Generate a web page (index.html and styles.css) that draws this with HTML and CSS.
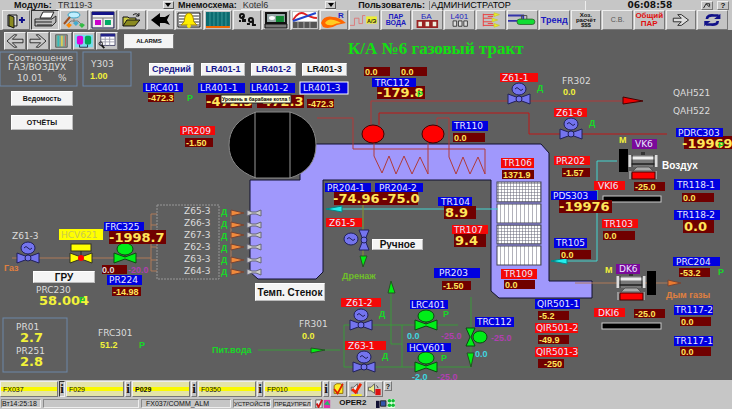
FILE: index.html
```html
<!DOCTYPE html>
<html lang="ru">
<head>
    <meta charset="UTF-8">
    <title>К/А №6 газовый тракт</title>
    <link rel="stylesheet" href="styles.css">
</head>
<body>
    <header>
        <div class="info-bar">
            <label for="module">Модуль:</label>
            <div class="combo combo-module"><select id="module"><option>TR119-3</option></select><span class="arrow"></span></div>
            <label for="scheme">Мнемосхема:</label>
            <div class="combo combo-scheme"><select id="scheme"><option>Kotel6</option></select><span class="arrow"></span></div>
            <label for="user" class="user-label">Пользователь:</label>
            <input id="user" class="user" type="text" value="АДМИНИСТРАТОР" readonly>
            <span class="blank"></span>
            <time class="clock">06:08:58</time>
            <span class="spacer"></span>
            <button class="mini" aria-label="Найти">
                <svg viewBox="0 0 10 8"><path d="M1 7L4 2L8 6M4 2h4v3" fill="none" stroke="#111"/></svg>
            </button>
            <button class="mini">?</button>
        </div>

        <div class="toolbar">
            <button aria-label="Выход"><svg viewBox="0 0 26 18"><path d="M5 4h9v11H5z" fill="#ddd" stroke="#111"/><path d="M6 4l5 2v11l-5-2z" fill="#8a8a20" stroke="#111"/><path d="M16 9h6M19 6v6" stroke="#10108a" stroke-width="2"/></svg></button>
            <button class="pressed" aria-label="Печать"><svg viewBox="0 0 26 18"><path d="M8 7l3-6h11l-3 6z" fill="#fff" stroke="#222"/><path d="M3 8h17l4-3v6l-4 4H3z" fill="#bbb" stroke="#222"/><path d="M3 11h17M5 14h15" stroke="#222"/></svg></button>
            <button aria-label="Поиск"><svg viewBox="0 0 26 18"><ellipse cx="13" cy="4" rx="6" ry="3" fill="#bfefff" stroke="#3aa0c0"/><path d="M9 6l-6 7" stroke="#a05020" stroke-width="2"/><path d="M13 8v3M7 13l3-3h7l3 3" fill="none" stroke="#777"/><path d="M8 12l3 2-3 3-3-3z" fill="#f80"/><path d="M15 10l3 2-3 3-3-3z" fill="#4ac"/><path d="M21 12l3 2-3 3-3-3z" fill="#3b4"/></svg></button>
            <button aria-label="Мнемосхемы"><svg viewBox="0 0 26 18"><path d="M2 1h22v16H2z" fill="#eee" stroke="#114"/><path d="M2 1h22v3H2z" fill="#118"/><path d="M5 9h6v5H5z" fill="#c0c"/><path d="M15 9h6v5h-6z" fill="#0a6"/><path d="M2 7h22M13 7v9" stroke="#777"/></svg></button>
            <button aria-label="Открыть"><svg viewBox="0 0 26 18"><path d="M4 15V6h5l1 1h7v2" fill="#cc4" stroke="#111"/><path d="M4 15l4-6h13l-5 6z" fill="#8a8a20" stroke="#111"/><path d="M14 4q4-3 6 1m0 0v-3m0 3h-3" fill="none" stroke="#111"/></svg></button>
            <button aria-label="Назад"><svg viewBox="0 0 26 18"><path d="M3 9l9-7v4h5l5-3-3 6 3 5-5-2h-5v4z" fill="#000"/></svg></button>
            <button aria-label="Тревоги"><svg viewBox="0 0 26 18"><path d="M2 2h22v14H2z" fill="#fff" stroke="#111"/><path d="M3 5h20M3 8h20M3 11h20M3 14h20" stroke="#333"/><path d="M5 14q4-2 4-8 1-4 4-4t4 4q0 6 4 8z" fill="#fe0" stroke="#a80"/><circle cx="13" cy="15" r="2" fill="#fe0"/></svg></button>
            <button aria-label="Тренды"><svg viewBox="0 0 26 18"><path d="M1 1h24v14H1z" fill="#0b6b70"/><path d="M5 1v14M9 1v14M13 1v14M17 1v14M21 1v14" stroke="#3a9a9a"/><path d="M1 16h24" stroke="#e60" stroke-width="2"/></svg></button>
            <button aria-label="Обзор"><svg viewBox="0 0 26 18"><g fill="none" stroke="#111" stroke-width="2"><circle cx="8" cy="5" r="2"/><path d="M5 10h2M9 5v6M11 11v-3"/><circle cx="17" cy="9" r="2"/><path d="M13 13h3M19 9v5h3"/></g></svg></button>
            <button aria-label="Станция"><svg viewBox="0 0 26 18"><path d="M3 2h20v10H3z" fill="#9aa" stroke="#111" stroke-width="2"/><ellipse cx="9" cy="7" rx="3" ry="2" fill="#fff"/><path d="M13 5h8v6h-8z" fill="#183"/><path d="M2 13h22v4H2z" fill="#777" stroke="#111"/></svg></button>
            <button aria-label="График"><svg viewBox="0 0 26 18"><path d="M1 1h24v9H1z" fill="#fff"/><path d="M1 9q6-10 12-6t12 4" fill="none" stroke="#d22" stroke-width="2"/><path d="M1 10L24 2" stroke="#24c" stroke-width="2"/><path d="M1 11h24v6H1z" fill="#555"/><path d="M6 11v6M12 11v6M18 11v6" stroke="#aaa"/></svg></button>
            <button aria-label="Горелка"><svg viewBox="0 0 26 18"><path d="M0 12Q3 4 12 6q6 0 13 6-5 1-9 2-8 5-14 2z" fill="#f60"/><path d="M4 12q3-5 9-3 4 1 7 3-5 0-8 2-6 1-8-2z" fill="#fc2"/><text x="17" y="7" class="icon-text">R</text></svg></button>
            <button class="wide" aria-label="АЭ"><svg viewBox="0 0 32 18"><path d="M0 15h5V7h5v6h4V4h3" fill="none" stroke="#d77"/><path d="M18 5h12v8H18z" fill="#ee3"/><text x="19" y="12" class="icon-small">А/Э</text></svg></button>
            <button class="wide blue-text">ПАР<br>ВОДА</button>
            <button class="wide" aria-label="БА"><svg viewBox="0 0 32 18"><text x="9" y="8" class="icon-big">БА</text><path d="M5 10h6v7H5zM13 10h6v7h-6zM21 10h6v7h-6z" fill="#eed" stroke="#922" stroke-width="2"/></svg></button>
            <button class="wide" aria-label="L401"><svg viewBox="0 0 32 18"><text x="6" y="8" class="icon-big">L401</text><path d="M9 10h4v6H9zM15 10h4v6h-4zM21 10h4v6h-4z" fill="#ddd" stroke="#333"/></svg></button>
            <button class="wide" aria-label="Горелки"><svg viewBox="0 0 32 18"><path d="M7 2v14M7 3h12M7 7h10M7 11h10M7 15h12M12 5h6M12 13h6" fill="none" stroke="#e33"/><path d="M19 1l6 2-6 2zM17 7l6 2-6 2zM19 13l6 2-6 2z" fill="#ee2" stroke="#cc3"/></svg></button>
            <button class="wide" aria-label="Барабан"><svg viewBox="0 0 32 18"><path d="M0 4h17v4M0 10h10" fill="none" stroke="#33a" stroke-width="2"/><path d="M15 8V4h6v4" fill="none" stroke="#444"/><rect x="10" y="8" width="20" height="6" rx="3" fill="#1d3" stroke="#363"/></svg></button>
            <button class="wide trend">Тренд</button>
            <button class="wide small-text">Хоз.<br>расчёт<br>$$$</button>
            <button class="wide grey-text">С.В.</button>
            <button class="wide red-text">Общий<br>ПАР</button>
            <button class="wide" aria-label="Вперёд"><svg viewBox="0 0 32 18"><path d="M7 7h9l-4-4h4l8 6-8 6h-4l4-4H7z" fill="#ddd" stroke="#222"/></svg></button>
            <button class="wide" aria-label="Обновить"><svg viewBox="0 0 32 18"><path d="M10 8q0-5 8-4h5M22 10q0 5-8 4H9" fill="none" stroke="#118" stroke-width="3"/><path d="M18 8h7V2zM14 10H7v6z" fill="#118"/></svg></button>
        </div>
    </header>

    <main class="mimic">
        <nav class="nav-bar">
            <button aria-label="Предыдущая"><svg viewBox="0 0 22 18"><path d="M2 9l8-7h3l-5 5h12v4H8l5 5h-3z" fill="#ccc" stroke="#222"/></svg></button>
            <button aria-label="Следующая"><svg viewBox="0 0 22 18"><path d="M20 9l-8-7H9l5 5H2v4h12l-5 5h3z" fill="#ccc" stroke="#222"/></svg></button>
            <button aria-label="Панели"><svg viewBox="0 0 22 18"><path d="M5 2h13v14H5z" fill="#8a9" stroke="#555"/><path d="M8 3v12" stroke="#3bb" stroke-width="2"/><path d="M12 3v12" stroke="#dc5" stroke-width="2"/><path d="M16 3v12" stroke="#c55"/></svg></button>
            <button aria-label="Ёмкости"><svg viewBox="0 0 22 18"><path d="M1 2h20v14H1z" fill="#7de"/><rect x="3" y="3" width="7" height="10" rx="2" fill="#d0d"/><rect x="12" y="3" width="7" height="10" rx="2" fill="#0a5"/><path d="M6 13v3h9v-3" fill="none" stroke="#224"/></svg></button>
            <button aria-label="Таблица"><svg viewBox="0 0 22 18"><path d="M4 1h16v13H4z" fill="#fff" stroke="#446"/><path d="M4 1h16v3H4z" fill="#228"/><path d="M4 7h16M4 10h16M9 4v10M14 4v10" stroke="#99a"/><circle cx="4" cy="12" r="2" fill="none" stroke="#111"/><path d="M5 14l3 3" stroke="#111" stroke-width="2"/></svg></button>
            <button class="alarms">ALARMS</button>
        </nav>

        <svg class="scheme" viewBox="0 30 732 350">
            <defs>
                <g id="bowtie"><path d="M-11 -5L0 -1L11 -5V5L0 1L-11 5Z"/></g>
                <g id="valve">
                    <path d="M0 -4V0" stroke="#224"/>
                    <ellipse cy="-10" rx="7" ry="6"/>
                    <path d="M-4 -10q2 -3 4 0t4 0" fill="none"/>
                    <use href="#bowtie"/>
                    <circle r="3"/>
                </g>
                <g id="regulator">
                    <ellipse cy="-9" rx="8" ry="6"/>
                    <path d="M0 -3V0"/>
                    <use href="#bowtie"/>
                </g>
                <g id="nozzle">
                    <path d="M-16 -3L-3 0L-16 3Z" fill="#f08a3c" stroke="#743"/>
                    <path d="M0 -3L5 -1H9L14 -3V3L9 1H5L0 3Z" fill="#ccc" stroke="#667"/>
                </g>
                <g id="motor">
                    <path d="M13 -3h4v3h-4z" fill="#333"/>
                    <rect x="1" width="28" height="12" fill="#777"/>
                    <path d="M3 3h24" stroke="#eee" stroke-width="3"/>
                    <path d="M3 9h24" stroke="#333" stroke-width="2"/>
                    <path d="M2 0v12M28 0v12" stroke="#ddd" stroke-width="3"/>
                    <path d="M4 0v12M26 0v12" stroke="#222"/>
                    <path d="M9 12h12l4 4H5z" fill="#aaa" stroke="#555"/>
                    <path d="M2 24v-7h26v7" fill="none" stroke="#999" stroke-width="2"/>
                    <rect x="4" y="17" width="23" height="7" fill="#f00" stroke="#400"/>
                </g>
                <pattern id="mesh" width="3" height="3" patternUnits="userSpaceOnUse">
                    <rect width="3" height="3" fill="#fff"/><path d="M0 0H3M0 0V3" stroke="#667"/>
                </pattern>
                <pattern id="bars" width="4" height="4" patternUnits="userSpaceOnUse">
                    <rect width="4" height="4" fill="#fff"/><path d="M0 0V4" stroke="#667"/>
                </pattern>
            </defs>

            <!-- газоход и барабан -->
            <path class="duct" d="M300 144H541L549 153V281H592V298H499L491 291V180H323V272L316 279H258L250 272V180H300Z"/>
            <path d="M256 112H290Q316 120 316 145T290 178H256Q229 168 229 145T256 112Z" fill="#000" stroke="#888"/>
            <path d="M255 112V178M290 112V178" stroke="#999"/>
            <rect x="497" y="182" width="44" height="20" fill="url(#mesh)" stroke="#445"/>
            <rect x="497" y="204" width="44" height="19" fill="url(#bars)" stroke="#445"/>
            <rect x="497" y="225" width="44" height="19" fill="url(#mesh)" stroke="#445"/>
            <rect x="497" y="246" width="44" height="19" fill="url(#bars)" stroke="#445"/>

            <!-- паровые линии -->
            <g class="pipe steam">
                <path d="M371 125V101H625"/>
                <path d="M317 118H353V149H485V174L478 157L470 174L463 157L456 174L449 157V118H437V125"/>
                <path d="M374 143V156L382 173L389 156L396 174L404 156L412 174L420 157L428 174V143"/>
                <path class="strong" d="M379 125V113H529V134H667"/>
            </g>
            <path d="M623 97L643 101L623 104Z" fill="#e00" stroke="#400"/>
            <g fill="#f00" stroke="#400"><ellipse cx="373" cy="134" rx="11" ry="9"/><ellipse cx="433" cy="134" rx="11" ry="9"/></g>

            <!-- воздух, газ, вода -->
            <g class="pipe air"><path d="M340 209H498M617 161H597V261H566"/></g>
            <path d="M326 209L342 206V212ZM551 261L567 258V264Z" fill="#2ee" stroke="#088"/>
            <g class="pipe gas">
                <path d="M12 258H151M157 214H151V271H157M151 225H157M151 235H157M151 247H157M151 260H157M231 213V272M575 283H668"/>
            </g>
            <path d="M668 280L681 283L668 286Z" fill="#e87a30" stroke="#743"/>
            <g class="pipe water">
                <path d="M258 350H340M344 367V325H458M344 367H471V297M402 325V367M391 292V344H402"/>
                <path d="M363 204V257" class="drain"/>
            </g>
            <path d="M311 348L325 350L311 353ZM388 293L391 281L395 293ZM467 353H474L471 367ZM360 256H367L363 267Z" fill="#0e1" stroke="#252"/>
            <rect x="157" y="205" width="62" height="74" class="dotted"/>

            <g class="frames">
                <rect x="0" y="52" width="77" height="34"/>
                <rect x="83" y="52" width="48" height="34"/>
                <rect x="3" y="318" width="64" height="54"/>
            </g>

            <!-- арматура -->
            <g class="blue-valve">
                <use href="#valve" x="519" y="99"/>
                <use href="#valve" x="571" y="134"/>
                <use href="#valve" x="28" y="258"/>
                <use href="#valve" x="361" y="325"/>
                <use href="#valve" x="364" y="367"/>
                <path d="M359 230H369L365 240L369 250H359L363 240Z"/>
                <ellipse cx="351" cy="239" rx="7" ry="6"/>
                <path d="M347 239q2 -3 4 0t4 0" fill="none"/>
                <circle cx="364" cy="240" r="3"/>
            </g>
            <g class="green-valve">
                <use href="#regulator" x="125" y="258"/>
                <use href="#regulator" x="426" y="325"/>
                <use href="#regulator" x="426" y="367"/>
                <path d="M466 328H475L471 337L475 346H466L470 337Z"/>
                <ellipse cx="480" cy="337" rx="7" ry="6"/>
            </g>
            <g fill="#ff0" stroke="#332"><rect x="71" y="244" width="20" height="7"/><use href="#bowtie" x="81" y="258"/></g>
            <path d="M81 251V258" stroke="#222"/><circle cx="81" cy="258" r="3" fill="#f00"/>
            <use href="#nozzle" x="247" y="213"/><use href="#nozzle" x="247" y="225"/><use href="#nozzle" x="247" y="235"/>
            <use href="#nozzle" x="247" y="247"/><use href="#nozzle" x="247" y="260"/><use href="#nozzle" x="247" y="272"/>

            <!-- вентилятор и дымосос -->
            <rect x="619" y="149" width="9" height="23"/><use href="#motor" x="628" y="155"/>
            <rect x="647" y="271" width="9" height="24"/><use href="#motor" x="616" y="276"/>
            <g stroke="#ccc"><rect x="603" y="196" width="58" height="6"/><rect x="602" y="323" width="59" height="6"/></g>

            <text x="348" y="54" class="title">К/А №6 газовый тракт</text>

            <!-- подписи без фона -->
            <g class="name">
                <text x="8" y="61">Соотношение</text><text x="8" y="70">ГАЗ/ВОЗДУХ</text>
                <text x="17" y="81">10.01</text><text x="58" y="81">%</text>
                <text x="91" y="67">Y303</text><text x="562" y="84">FR302</text>
                <text x="673" y="96">QAH521</text><text x="673" y="114">QAH522</text>
                <text x="12" y="239">Z61-3</text><text x="36" y="293">PRC230</text>
                <text x="16" y="330">PR01</text><text x="16" y="354">PR251</text>
                <text x="98" y="336">FRC301</text><text x="299" y="327">FR301</text>
                <text x="184" y="214">Z65-3</text><text x="184" y="226">Z66-3</text><text x="184" y="238">Z67-3</text>
                <text x="184" y="250">Z62-3</text><text x="184" y="262">Z63-3</text><text x="184" y="274">Z64-3</text>
                <text x="662" y="169" class="air-name">Воздух</text>
            </g>
            <g class="reading">
                <text x="90" y="79">1.00</text><text x="563" y="95">0.0</text>
                <text x="100" y="348">51.2</text><text x="302" y="339">0.0</text>
                <text x="619" y="143">M</text><text x="605" y="273">M</text>
                <text x="39" y="305" class="big">58.004</text>
                <text x="20" y="342" class="big">2.7</text><text x="20" y="366" class="big">2.8</text>
            </g>
            <g class="mode">
                <text x="187" y="101">P</text><text x="537" y="91">Д</text><text x="589" y="126">Д</text>
                <text x="221" y="215">Д</text><text x="221" y="227">Д</text><text x="221" y="239">Д</text>
                <text x="221" y="251">Д</text><text x="221" y="263">Д</text><text x="221" y="275">Д</text>
                <text x="379" y="317">Д</text><text x="382" y="359">Д</text>
                <text x="443" y="317">P</text><text x="441" y="361">P</text><text x="139" y="348">P</text>
                <text x="718" y="275">P</text><text x="79" y="303">P</text>
                <text x="342" y="279" class="drain-name">Дренаж</text><text x="212" y="353">Пит.вода</text>
            </g>
            <g class="gas-name"><text x="4" y="271">Газ</text><text x="666" y="298">Дым газы</text></g>
            <g class="setpoint"><text x="128" y="273">-20.0</text><text x="441" y="339">-25.0</text><text x="437" y="380">-25.0</text><text x="491" y="341">-25.0</text></g>
            <g class="output"><text x="407" y="339">0.0</text><text x="412" y="380">-2.0</text><text x="475" y="357">0.0</text></g>

            <!-- значения -->
            <g class="value">
                <rect x="148" y="93" width="26" height="9"/><text x="148" y="101">-472.3</text>
                <rect x="307" y="99" width="27" height="9"/><text x="308" y="107">-472.3</text>
                <rect x="185" y="138" width="28" height="9"/><text x="186" y="146">-1.50</text>
                <rect x="364" y="67" width="26" height="9"/><text x="365" y="75">0.0</text>
                <rect x="400" y="67" width="27" height="9"/><text x="401" y="75">0.0</text>
                <rect x="453" y="133" width="32" height="9"/><text x="454" y="141">0.0</text>
                <rect x="562" y="168" width="28" height="9"/><text x="563" y="176">-1.57</text>
                <rect x="634" y="182" width="31" height="9"/><text x="635" y="190">-25.0</text>
                <rect x="682" y="193" width="32" height="9"/><text x="683" y="201">0.0</text>
                <rect x="603" y="231" width="32" height="9"/><text x="604" y="239">0.0</text>
                <rect x="560" y="250" width="31" height="9"/><text x="561" y="258">0.0</text>
                <rect x="679" y="268" width="31" height="9"/><text x="680" y="276">-53.2</text>
                <rect x="502" y="170" width="32" height="9"/><text x="503" y="178">1371.9</text>
                <rect x="504" y="280" width="31" height="9"/><text x="505" y="288">0.0</text>
                <rect x="442" y="281" width="29" height="9"/><text x="443" y="289">-1.50</text>
                <rect x="112" y="287" width="29" height="9"/><text x="113" y="295">-14.98</text>
                <rect x="102" y="265" width="25" height="9"/><text x="102" y="273" class="pale">0.0</text>
                <rect x="538" y="311" width="31" height="9"/><text x="539" y="319">-5.2</text>
                <rect x="538" y="335" width="31" height="9"/><text x="539" y="343">-49.9</text>
                <rect x="538" y="359" width="26" height="9"/><text x="544" y="367">-250</text>
                <rect x="634" y="309" width="31" height="9"/><text x="635" y="317">-25.0</text>
                <rect x="680" y="317" width="31" height="9"/><text x="681" y="325">0.0</text>
                <rect x="680" y="347" width="31" height="9"/><text x="681" y="355">0.0</text>
            </g>
            <g class="value big">
                <rect x="206" y="95" width="46" height="13"/><text x="206" y="106">-472.3</text>
                <rect x="257" y="95" width="47" height="13"/><text x="257" y="106">-472.3</text>
                <rect x="377" y="86" width="48" height="13"/><text x="377" y="97">-179.8</text>
                <rect x="684" y="136" width="48" height="13"/><text x="682" y="148">-19969</text>
                <rect x="559" y="200" width="53" height="13"/><text x="559" y="211">-19976</text>
                <rect x="683" y="220" width="31" height="13"/><text x="684" y="231">0.0</text>
                <rect x="444" y="206" width="32" height="13"/><text x="445" y="217">8.9</text>
                <rect x="454" y="234" width="32" height="13"/><text x="455" y="245">9.4</text>
                <rect x="334" y="192" width="48" height="13"/><text x="333" y="203">-74.96</text>
                <rect x="382" y="192" width="36" height="13"/><text x="382" y="203">-75.0</text>
                <rect x="109" y="230" width="57" height="14"/><text x="109" y="242">-1998.7</text>
            </g>
            <g class="mode"><text x="417" y="97">P</text><text x="718" y="148">P</text></g>

            <!-- позиции приборов -->
            <g class="tag blue">
                <rect x="143" y="83" width="40" height="9"/><text x="145" y="91">LRC401</text>
                <rect x="198" y="83" width="47" height="10"/><text x="200" y="91">LR401-1</text>
                <rect x="250" y="83" width="45" height="10"/><text x="251" y="91">LR401-2</text>
                <rect x="300" y="82" width="48" height="12" stroke="#fff"/><text x="303" y="91">LR401-3</text>
                <rect x="372" y="78" width="44" height="9"/><text x="375" y="86">TRC112</text>
                <rect x="452" y="121" width="36" height="10"/><text x="454" y="129">TR110</text>
                <rect x="676" y="128" width="47" height="9"/><text x="678" y="136">PDRC303</text>
                <rect x="551" y="191" width="46" height="9"/><text x="553" y="199">PDS303</text>
                <rect x="674" y="179" width="46" height="11"/><text x="677" y="188">TR118-1</text>
                <rect x="674" y="210" width="46" height="10"/><text x="677" y="218">TR118-2</text>
                <rect x="554" y="238" width="33" height="10"/><text x="556" y="246">TR105</text>
                <rect x="673" y="257" width="47" height="9"/><text x="676" y="265">PRC204</text>
                <rect x="434" y="268" width="46" height="10"/><text x="439" y="276">PR203</text>
                <rect x="438" y="197" width="34" height="9"/><text x="441" y="205">TR104</text>
                <rect x="325" y="183" width="46" height="9"/><text x="327" y="191">PR204-1</text>
                <rect x="375" y="183" width="48" height="9"/><text x="379" y="191">PR204-2</text>
                <rect x="104" y="222" width="40" height="9"/><text x="105" y="230">FRC325</text>
                <rect x="107" y="275" width="35" height="10"/><text x="109" y="283">PR224</text>
                <rect x="410" y="300" width="38" height="9"/><text x="411" y="308">LRC401</text>
                <rect x="407" y="343" width="44" height="9"/><text x="409" y="351">HCV601</text>
                <rect x="475" y="317" width="39" height="10"/><text x="477" y="325">TRC112</text>
                <rect x="535" y="299" width="45" height="10"/><text x="537" y="307">QIR501-1</text>
                <rect x="674" y="305" width="39" height="10"/><text x="675" y="313">TR117-2</text>
                <rect x="674" y="336" width="39" height="10"/><text x="675" y="344">TR117-1</text>
            </g>
            <g class="tag red">
                <rect x="180" y="126" width="35" height="9"/><text x="182" y="134">PR209</text>
                <rect x="500" y="73" width="38" height="9"/><text x="502" y="81">Z61-1</text>
                <rect x="554" y="108" width="33" height="9"/><text x="556" y="116">Z61-6</text>
                <rect x="554" y="156" width="36" height="9"/><text x="556" y="164">PR202</text>
                <rect x="594" y="181" width="31" height="9"/><text x="598" y="189">VKI6</text>
                <rect x="602" y="219" width="36" height="9"/><text x="604" y="227">TR103</text>
                <rect x="501" y="158" width="33" height="10"/><text x="503" y="166">TR106</text>
                <rect x="501" y="269" width="36" height="10"/><text x="504" y="277">TR109</text>
                <rect x="452" y="225" width="36" height="9"/><text x="454" y="233">TR107</text>
                <rect x="326" y="218" width="36" height="9"/><text x="329" y="226">Z61-5</text>
                <rect x="341" y="298" width="40" height="9"/><text x="346" y="306">Z61-2</text>
                <rect x="345" y="341" width="41" height="9"/><text x="348" y="349">Z63-1</text>
                <rect x="535" y="323" width="43" height="10"/><text x="536" y="331">QIR501-2</text>
                <rect x="535" y="347" width="43" height="10"/><text x="536" y="355">QIR501-3</text>
                <rect x="594" y="308" width="31" height="9"/><text x="598" y="316">DKI6</text>
            </g>
            <g class="tag purple">
                <rect x="632" y="139" width="25" height="10"/><text x="635" y="147">VK6</text>
                <rect x="616" y="264" width="24" height="10"/><text x="619" y="272">DK6</text>
            </g>
            <g class="tag yellow"><rect x="59" y="229" width="44" height="11"/><text x="61" y="238">HCV621</text></g>

            <g class="hint"><rect x="221" y="95" width="70" height="8"/><text x="222" y="101">Уровень в барабане котла !</text></g>

            <!-- кнопки на схеме -->
            <foreignObject x="11" y="91" width="62" height="15"><button class="plate small">Ведомость</button></foreignObject>
            <foreignObject x="11" y="115" width="62" height="15"><button class="plate small">ОТЧЁТЫ</button></foreignObject>
            <foreignObject x="149" y="63" width="45" height="13"><button class="plate navy">Средний</button></foreignObject>
            <foreignObject x="201" y="63" width="44" height="13"><button class="plate navy">LR401-1</button></foreignObject>
            <foreignObject x="251" y="63" width="45" height="13"><button class="plate navy">LR401-2</button></foreignObject>
            <foreignObject x="302" y="63" width="45" height="13"><button class="plate level">LR401-3</button></foreignObject>
            <foreignObject x="33" y="271" width="62" height="12"><button class="plate">ГРУ</button></foreignObject>
            <foreignObject x="372" y="239" width="51" height="11"><button class="plate">Ручное</button></foreignObject>
            <foreignObject x="255" y="283" width="70" height="18"><button class="plate">Темп. Стенок</button></foreignObject>
        </svg>
    </main>

    <footer>
        <div class="alarm-row">
            <button class="alarm">FX037</button><button class="info pressed">i</button>
            <button class="alarm">F029</button><button class="info">i</button>
            <button class="alarm strong">P029</button><button class="info">i</button>
            <button class="alarm">F0350</button><button class="info">i</button>
            <button class="alarm">FP010</button><button class="info">i</button>
            <button class="ack" aria-label="Квитировать"><svg viewBox="0 0 16 16"><path d="M3 13V4l3-2h4l3 2v9z" fill="#fe2" stroke="#860"/><path d="M3 8l4 5 6-11" fill="none" stroke="#d20" stroke-width="2"/></svg></button>
            <button class="ack" aria-label="Сброс звука"><svg viewBox="0 0 16 16"><path d="M2 6h3l4-4v11L5 10H2z" fill="#eee" stroke="#555"/><path d="M3 8l4 4 6-10" fill="none" stroke="#e20" stroke-width="3"/><path d="M2 15h12" stroke="#fe2" stroke-width="2"/></svg></button>
            <button class="ack" aria-label="Звук"><svg viewBox="0 0 16 16"><path d="M1 6h3l4-4v11L4 10H1z" fill="#ee8" stroke="#555"/><path d="M9 8h6v7H9z" fill="#d11"/><path d="M10 4q2 1 2 3" fill="none" stroke="#333"/></svg></button>
            <button class="help">?</button>
        </div>
        <div class="status-row">
            <span class="cell date">Вт14:25:18</span>
            <span class="cell empty"></span>
            <span class="cell source">FX037/COMM_ALM</span>
            <span class="cell kind">УСТРОЙСТВ</span>
            <span class="cell kind">ПРЕДУПРЕЛ</span>
            <svg class="status-icons" viewBox="0 0 18 10"><path d="M1 1h7v9H1z" fill="#eee" stroke="#555"/><path d="M2 5l2 4 4-8" fill="none" stroke="#c11" stroke-width="2"/><path d="M10 1h7v9h-7z" fill="#d3a"/><path d="M10 6l4-4 3 5z" fill="#2b6"/></svg>
            <b class="oper">OPER2</b>
            <svg class="status-end" viewBox="0 0 22 10"><path d="M1 2h4v8H1z" fill="#113"/><path d="M6 2h6v6H6z" fill="#35a" stroke="#222"/><path d="M14 0h8v10h-8z" fill="#dfd"/><g fill="#1b3"><circle cx="16" cy="2" r="2"/><circle cx="20" cy="2" r="2"/><circle cx="16" cy="7" r="2"/><circle cx="20" cy="7" r="2"/></g></svg>
        </div>
    </footer>
</body>
</html>
```
FILE: styles.css
```css
* {
    box-sizing: border-box;
}
body {
    margin: 0;
    min-height: 100vh;
    display: flex;
    flex-direction: column;
    background: #c6c6c6;
    font-family: "Liberation Sans", Arial, sans-serif;
    font-size: 9px;
    color: #111;
}
button {
    font-family: inherit;
    margin: 0;
    padding: 0;
    color: #111;
    background: #c4c4c4;
    border: 1px solid;
    border-color: #eee #777 #777 #eee;
    overflow: hidden;
    cursor: pointer;
}
button svg {
    display: block;
    width: 100%;
    height: 100%;
}
button.pressed {
    border-color: #333 #eee #eee #333;
}

/* верхняя строка */
.info-bar {
    display: flex;
    align-items: center;
    height: 10px;
    padding: 0 3px 0 14px;
    gap: 4px;
    overflow: hidden;
    line-height: 9px;
}
.info-bar label {
    font-weight: bold;
    white-space: nowrap;
}
.info-bar .user-label {
    margin-left: 18px;
}
.combo {
    display: flex;
    height: 9px;
    background: #c9c9c9;
    border-bottom: 1px solid #eee;
}
.combo-module {
    flex: 114;
}
.combo-scheme {
    flex: 92;
}
.combo select {
    flex: 1;
    min-width: 0;
    appearance: none;
    border: 0;
    padding: 0 2px;
    background: none;
    font: inherit;
    color: #333;
}
.arrow {
    width: 11px;
    border: 1px solid;
    border-color: #eee #555 #555 #eee;
    display: flex;
    justify-content: center;
    align-items: center;
}
.arrow::before {
    content: "";
    border: 3px solid transparent;
    border-top: 4px solid #000;
    border-bottom: 0;
}
.user {
    flex: 148;
    min-width: 0;
    height: 9px;
    border: 0;
    border-left: 1px solid #888;
    border-right: 1px solid #eee;
    padding: 0 1px;
    background: #c9c9c9;
    font: inherit;
}
.blank {
    flex: 32;
}
.clock {
    font-family: "DejaVu Sans", sans-serif;
    font-weight: bold;
    font-size: 9px;
}
.spacer {
    flex: 20;
}
.mini {
    width: 12px;
    height: 9px;
    font-size: 8px;
    font-weight: bold;
    line-height: 7px;
}

/* панель инструментов */
.toolbar {
    display: flex;
    height: 20px;
    padding: 0 4px 0 2px;
    gap: 1px;
}
.toolbar button {
    flex: 28 1 0;
    min-width: 0;
    font-weight: bold;
    font-size: 7px;
    line-height: 6px;
}
.toolbar .wide {
    flex-grow: 31;
}
.toolbar .blue-text {
    color: #1a1ac0;
}
.toolbar .trend {
    color: #1a1ac0;
    font-size: 9px;
}
.toolbar .small-text {
    font-size: 6px;
    line-height: 5px;
}
.toolbar .grey-text {
    color: #555;
    font-weight: normal;
}
.toolbar .red-text {
    color: #e01010;
    font-size: 8px;
    line-height: 8px;
}
.icon-text, .icon-big, .icon-small {
    fill: #1a1ac0;
    font-size: 8px;
    font-weight: bold;
}
.icon-big {
    font-size: 9px;
    font-weight: normal;
}
.icon-small {
    font-size: 6px;
    fill: #222;
}

/* мнемосхема: навигация лежит поверх рисунка */
.mimic {
    display: grid;
    background: #5f5f5f;
}
.nav-bar, .scheme {
    grid-area: 1 / 1;
}
.nav-bar {
    z-index: 1;
    align-self: start;
    justify-self: start;
    display: flex;
    align-items: center;
    gap: 1px;
    padding: 2px 4px;
}
.nav-bar button {
    width: 22px;
    height: 18px;
}
.nav-bar .alarms {
    width: 50px;
    height: 15px;
    margin-left: 5px;
    background: #f4f4f4;
    font-size: 6px;
    font-weight: bold;
}
.scheme {
    display: block;
    width: 100%;
    height: auto;
    font-size: 9px;
}
.title {
    font-family: "Liberation Serif", serif;
    font-size: 17px;
    font-weight: bold;
    fill: #12e012;
}
.duct {
    fill: #a098fc;
    stroke: #111130;
}
.pipe {
    fill: none;
    stroke-width: 1;
}
.steam {
    stroke: #b03a3a;
}
.steam .strong {
    stroke: #c01818;
}
.air {
    stroke: #45d5d0;
}
.gas {
    stroke: #b07a58;
}
.water {
    stroke: #3a9a3a;
}
.drain {
    stroke: #8a9a30;
}
.dotted {
    fill: none;
    stroke: #999;
    stroke-dasharray: 2 1;
}
.frames {
    fill: none;
    stroke: #6d87a8;
}
.blue-valve {
    fill: #7474ee;
    stroke: #20205a;
}
.green-valve {
    fill: #00ee18;
    stroke: #0a4a10;
}
.name {
    fill: #dcdcdc;
    font-family: "DejaVu Sans", sans-serif;
    font-size: 9px;
}
.air-name {
    fill: #fff;
    font-family: "Liberation Sans", sans-serif;
    font-size: 10px;
    font-weight: bold;
}
.reading {
    fill: #f2f23a;
    font-weight: bold;
}
.mode {
    fill: #18d828;
    font-weight: bold;
    font-size: 9px;
}
.drain-name {
    fill: #6fbf2a;
}
.gas-name {
    fill: #e08040;
    font-weight: bold;
    font-size: 9px;
}
.setpoint {
    fill: #b040b0;
    font-weight: bold;
}
.output {
    fill: #40d8e0;
    font-weight: bold;
}
.value rect {
    fill: #700000;
}
.value text {
    fill: #ffe65a;
    font-weight: bold;
}
.value .pale {
    fill: #ddd;
}
.big {
    font-family: "DejaVu Sans", sans-serif;
    font-weight: bold;
    font-size: 13px;
}
.tag text {
    fill: #e8e8ff;
    font-family: "DejaVu Sans", sans-serif;
    font-size: 9px;
}
.blue rect {
    fill: #0000e0;
}
.red rect {
    fill: #f50808;
}
.purple rect {
    fill: #7a0a9a;
}
.yellow rect {
    fill: #ff0;
}
.tag.yellow text {
    fill: #c8c850;
}
.hint rect {
    fill: #ffffd8;
    stroke: #222;
}
.hint text {
    font-size: 5px;
    font-weight: bold;
}
.plate {
    display: block;
    width: 100%;
    height: 100%;
    background: #f4f4f4;
    border-color: #fff #bbb #bbb #fff;
    font-size: 10px;
    font-weight: bold;
    line-height: 9px;
    white-space: nowrap;
}
.plate.navy, .plate.level {
    font-size: 9px;
}
.plate.navy {
    color: #14148c;
}
.plate.small {
    font-size: 7px;
}

/* строка тревог и состояние */
.alarm-row {
    display: flex;
    height: 18px;
    padding: 1px 0;
    gap: 1px;
}
.alarm-row button {
    font-size: 7px;
}
.alarm-row .alarm {
    width: 58px;
    padding-left: 2px;
    text-align: left;
    background: linear-gradient(#e4e4a8 5px, #fafa00 5px, #fafa00 9px, #e4e4a8 9px);
}
.alarm-row .strong {
    font-weight: bold;
}
.alarm-row .info {
    width: 6px;
    font-family: "Liberation Serif", serif;
    font-size: 13px;
    font-weight: bold;
    line-height: 12px;
}
.alarm-row .ack {
    width: 17px;
}
.alarm-row .help {
    width: 8px;
    height: 10px;
    font-weight: bold;
}
.status-row {
    display: flex;
    height: 11px;
    gap: 2px;
    padding: 1px;
    font-size: 7px;
    line-height: 8px;
    overflow: hidden;
}
.cell {
    border: 1px solid;
    border-color: #888 #eee #eee #888;
    white-space: nowrap;
}
.date {
    width: 40px;
}
.empty {
    width: 96px;
}
.source {
    width: 90px;
    padding-left: 4px;
}
.kind {
    font-size: 6px;
}
.status-icons {
    width: 18px;
}
.oper {
    width: 38px;
    text-align: center;
    font-size: 8px;
}
.status-end {
    width: 22px;
}
```
